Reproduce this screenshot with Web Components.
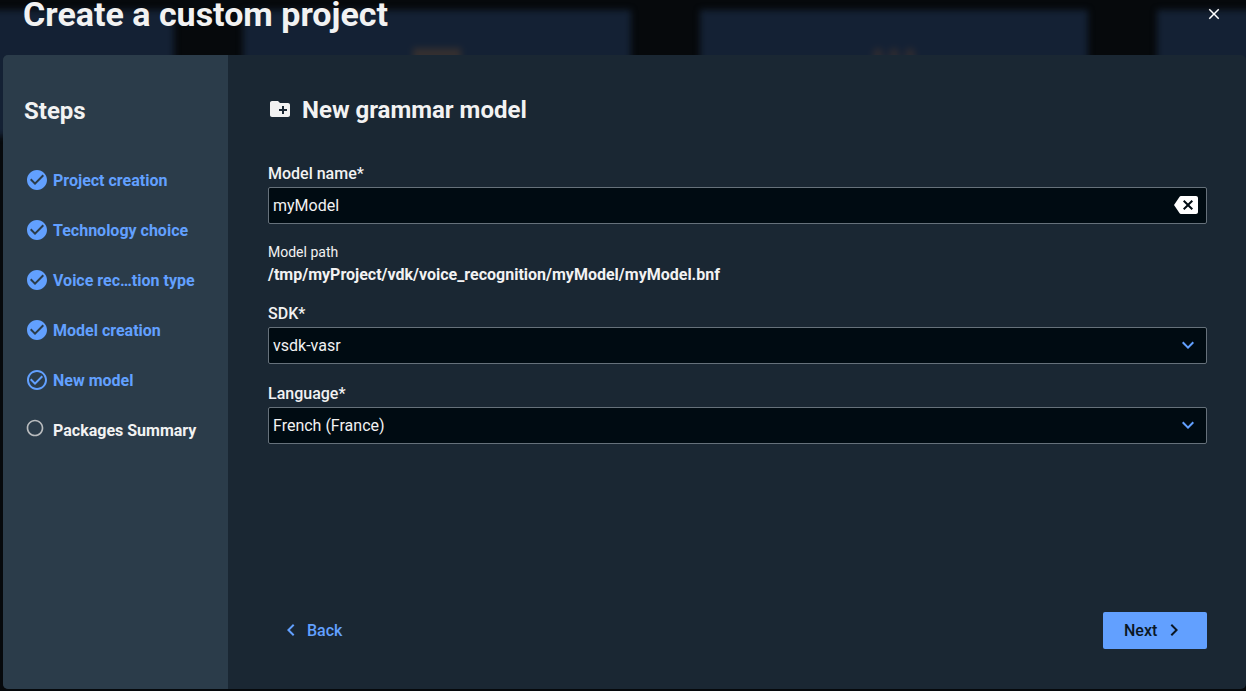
<!DOCTYPE html>
<html lang="en">
<head>
<meta charset="utf-8">
<meta name="viewport" content="width=device-width, initial-scale=1">
<title>Create a custom project</title>
<style>
  body {
    margin: 0;
    background: #05080b;
    color: #f2f2f2;
    font: 16px/20px Roboto, sans-serif;
    --accent: #62a0ff;
    --panel: #1a2733;
    --side: #2b3c4a;
    --field: #000b12;
    --border: #66717b;
  }
</style>
</head>
<body>
<project-wizard heading="Create a custom project">
  <step-list slot="steps" heading="Steps">
    <step-item state="done">Project creation</step-item>
    <step-item state="done">Technology choice</step-item>
    <step-item state="done">Voice rec…tion type</step-item>
    <step-item state="done">Model creation</step-item>
    <step-item state="current">New model</step-item>
    <step-item state="todo">Packages Summary</step-item>
  </step-list>
  <model-form heading="New grammar model">
    <text-field label="Model name*" value="myModel"></text-field>
    <path-info label="Model path">/tmp/myProject/vdk/voice_recognition/myModel/myModel.bnf</path-info>
    <select-field label="SDK*" options="vsdk-vasr|vsdk-csdk"></select-field>
    <select-field label="Language*" options="French (France)|English (United States)"></select-field>
  </model-form>
  <wizard-button slot="actions" kind="back">Back</wizard-button>
  <wizard-button slot="actions" kind="next">Next</wizard-button>
</project-wizard>

<script>
const icons = {
  close: 'M19 6.41L17.59 5 12 10.59 6.41 5 5 6.41 10.59 12 5 17.59 6.41 19 12 13.41 17.59 19 19 17.59 13.41 12z',
  done: 'M12 2C6.48 2 2 6.48 2 12s4.48 10 10 10 10-4.48 10-10S17.52 2 12 2zm-2 15l-5-5 1.41-1.41L10 14.17l7.59-7.59L19 8l-9 9z',
  current: 'M16.59 7.58L10 14.17l-3.59-3.58L5 12l5 5 8-8zM12 2C6.48 2 2 6.48 2 12s4.48 10 10 10 10-4.48 10-10S17.52 2 12 2zm0 18c-4.42 0-8-3.58-8-8s3.58-8 8-8 8 3.58 8 8-3.58 8-8 8z',
  todo: 'M12 2C6.48 2 2 6.48 2 12s4.48 10 10 10 10-4.48 10-10S17.52 2 12 2zm0 18c-4.42 0-8-3.58-8-8s3.58-8 8-8 8 3.58 8 8-3.58 8-8 8z',
  folder: 'M20 6h-8l-2-2H4c-1.11 0-1.99.89-1.99 2L2 18c0 1.11.89 2 2 2h16c1.11 0 2-.89 2-2V8c0-1.11-.89-2-2-2zm-1 8h-3v3h-2v-3h-3v-2h3V9h2v3h3v2z',
  clear: 'M22 3H7c-.69 0-1.23.35-1.59.88L0 12l5.41 8.11c.36.53.9.89 1.59.89h15c1.1 0 2-.9 2-2V5c0-1.1-.9-2-2-2zm-3 12.59L17.59 17 14 13.41 10.41 17 9 15.59 12.59 12 9 8.41 10.41 7 14 10.59 17.59 7 19 8.41 15.41 12 19 15.59z',
  down: 'M16.59 8.59L12 13.17 7.41 8.59 6 10l6 6 6-6z',
  back: 'M15.41 7.41L14 6l-6 6 6 6 1.41-1.41L10.83 12z',
  next: 'M10 6L8.59 7.41 13.17 12l-4.58 4.59L10 18l6-6z'
};

function icon(name, size = 24) {
  return `<svg viewBox="0 0 24 24" width="${size}" height="${size}" fill="currentColor" aria-hidden="true"><path d="${icons[name]}"/></svg>`;
}

class BlurredBackdrop extends HTMLElement {
  constructor() {
    super();
    this.attachShadow({ mode: 'open' }).innerHTML = `
      <style>
        :host {
          position: absolute;
          inset: 0;
          z-index: -1;
          overflow: hidden;
          background: #06090c;
        }

        .cards {
          display: flex;
          gap: 69px;
          margin: 10px 0 0 -214px;
          filter: blur(3px);
        }

        .card {
          flex: none;
          display: flex;
          justify-content: center;
          align-items: flex-end;
          gap: 6px;
          box-sizing: border-box;
          width: 388px;
          height: 126px;
          padding-bottom: 68px;
          background: #142134;
        }

        .tile {
          width: 48px;
          height: 20px;
          background: #332f30;
        }

        .dot {
          width: 10px;
          height: 20px;
          border-radius: 5px;
          background: #2c2a31;
        }
      </style>
      <div class="cards">
        <div class="card"></div>
        <div class="card"><div class="tile"></div></div>
        <div class="card"><div class="dot"></div><div class="dot"></div><div class="dot"></div></div>
        <div class="card"></div>
      </div>
    `;
  }
}

class ProjectWizard extends HTMLElement {
  constructor() {
    super();
    this.attachShadow({ mode: 'open' }).innerHTML = `
      <style>
        :host {
          position: relative;
          z-index: 0;
          display: flex;
          flex-direction: column;
          box-sizing: border-box;
          min-height: 100vh;
          padding: 0 0 2px 3px;
        }

        header {
          display: flex;
          align-items: center;
          justify-content: space-between;
          height: 28px;
          margin-bottom: 27px;
          padding: 0 23px 0 20px;
        }

        h1 {
          margin: 0;
          font-size: 34px;
          line-height: 28px;
          font-weight: 700;
        }

        .close {
          display: flex;
          padding: 0;
          border: 0;
          background: none;
          color: #fff;
          cursor: pointer;
        }

        .panel {
          flex: 1;
          display: flex;
          border-radius: 5px;
          overflow: hidden;
          background: var(--panel);
        }

        main {
          flex: 1;
          display: flex;
          flex-direction: column;
          justify-content: space-between;
          min-width: 0;
          padding: 41px 39px 40px 40px;
        }

        footer {
          display: flex;
          justify-content: space-between;
        }
      </style>
      <blurred-backdrop></blurred-backdrop>
      <header>
        <h1>${this.getAttribute('heading')}</h1>
        <button class="close" type="button" aria-label="Close">${icon('close', 18)}</button>
      </header>
      <div class="panel">
        <slot name="steps"></slot>
        <main>
          <slot></slot>
          <footer><slot name="actions"></slot></footer>
        </main>
      </div>
    `;
  }
}

class StepList extends HTMLElement {
  constructor() {
    super();
    this.attachShadow({ mode: 'open' }).innerHTML = `
      <style>
        :host {
          flex: none;
          box-sizing: border-box;
          width: 225px;
          padding: 42px 21px;
          background: var(--side);
        }

        h2 {
          margin: 0 0 43px;
          font-size: 24px;
          line-height: 28px;
          font-weight: 700;
        }

        nav {
          display: flex;
          flex-direction: column;
          gap: 25px;
        }
      </style>
      <h2>${this.getAttribute('heading')}</h2>
      <nav aria-label="Steps"><slot></slot></nav>
    `;
  }
}

class StepItem extends HTMLElement {
  constructor() {
    super();
    const state = this.getAttribute('state');
    this.attachShadow({ mode: 'open' }).innerHTML = `
      <style>
        :host {
          display: grid;
          grid-template-columns: 24px auto;
          gap: 4px;
          line-height: 25px;
          font-weight: 700;
          color: var(--accent);
          white-space: nowrap;
          margin-left: 1px;
        }

        :host([state='todo']) {
          color: inherit;
        }

        :host([state='todo']) svg {
          color: #b9bcbe;
        }

        svg {
          display: block;
        }
      </style>
      ${icon(state, state === 'todo' ? 20 : 24)}
      <span><slot></slot></span>
    `;
  }
}

class ModelForm extends HTMLElement {
  constructor() {
    super();
    this.attachShadow({ mode: 'open' }).innerHTML = `
      <style>
        :host {
          display: block;
        }

        h2 {
          display: flex;
          align-items: center;
          gap: 10px;
          margin: 0 0 39px;
          font-size: 24px;
          line-height: 28px;
          font-weight: 700;
        }

        h2 svg {
          margin-bottom: 2px;
        }

        form {
          display: flex;
          flex-direction: column;
          gap: 19px;
        }
      </style>
      <h2>${icon('folder')}${this.getAttribute('heading')}</h2>
      <form><slot></slot></form>
    `;
  }
}

const fieldStyle = `
  :host {
    display: flex;
    flex-direction: column;
    gap: 3px;
  }

  label {
    font-weight: 500;
    line-height: 21px;
  }

  .box {
    display: grid;
    align-items: center;
    border: 1px solid var(--border);
    border-radius: 2px;
    background: var(--field);
  }

  input,
  select {
    grid-area: 1 / 1;
    appearance: none;
    box-sizing: border-box;
    width: 100%;
    height: 35px;
    margin: 0;
    padding: 0 40px 0 4px;
    border: 0;
    outline: 0;
    background: none;
    color: inherit;
    font: inherit;
  }

  .box:focus-within {
    border-color: var(--accent);
  }

  option {
    background: var(--field);
  }

  button,
  svg {
    display: block;
  }

  .box svg {
    margin-bottom: 1px;
  }
`;

class TextField extends HTMLElement {
  constructor() {
    super();
    this.attachShadow({ mode: 'open' }).innerHTML = `
      <style>
        ${fieldStyle}
        button {
          grid-area: 1 / 1;
          justify-self: end;
          margin-right: 8px;
          padding: 0;
          border: 0;
          background: none;
          color: #fff;
          cursor: pointer;
        }
      </style>
      <label for="field">${this.getAttribute('label')}</label>
      <div class="box">
        <input id="field" type="text" value="${this.getAttribute('value')}">
        <button type="button" aria-label="Clear">${icon('clear')}</button>
      </div>
    `;
    const input = this.shadowRoot.querySelector('input');
    this.shadowRoot.querySelector('button').addEventListener('click', () => {
      input.value = '';
      input.focus();
    });
  }
}

class SelectField extends HTMLElement {
  constructor() {
    super();
    const options = this.getAttribute('options').split('|');
    this.attachShadow({ mode: 'open' }).innerHTML = `
      <style>
        ${fieldStyle}
        svg {
          grid-area: 1 / 1;
          justify-self: end;
          margin-right: 6px;
          color: var(--accent);
          pointer-events: none;
        }
      </style>
      <label for="field">${this.getAttribute('label')}</label>
      <div class="box">
        <select id="field">${options.map(o => `<option>${o}</option>`).join('')}</select>
        ${icon('down')}
      </div>
    `;
  }
}

class PathInfo extends HTMLElement {
  constructor() {
    super();
    this.attachShadow({ mode: 'open' }).innerHTML = `
      <style>
        :host {
          display: flex;
          flex-direction: column;
          gap: 4px;
        }

        .label {
          font-size: 14px;
          line-height: 18px;
        }

        .path {
          font-weight: 700;
          line-height: 19px;
          overflow-wrap: anywhere;
        }
      </style>
      <span class="label">${this.getAttribute('label')}</span>
      <span class="path"><slot></slot></span>
    `;
  }
}

class WizardButton extends HTMLElement {
  constructor() {
    super();
    const back = this.getAttribute('kind') === 'back';
    this.attachShadow({ mode: 'open' }).innerHTML = `
      <style>
        :host {
          display: block;
        }

        button {
          display: flex;
          align-items: center;
          justify-content: space-between;
          gap: 4px;
          min-width: 104px;
          height: 37px;
          padding: 0 21px;
          border: 0;
          border-radius: 2px;
          background: var(--accent);
          color: #0b1724;
          font: inherit;
          font-weight: 500;
          cursor: pointer;
        }

        svg {
          margin-bottom: 1px;
        }

        :host([kind='back']) button {
          min-width: 0;
          padding: 0 11px;
          background: none;
          color: var(--accent);
        }
      </style>
      <button type="button">${back ? icon('back') : ''}<slot></slot>${back ? '' : icon('next')}</button>
    `;
  }
}

customElements.define('blurred-backdrop', BlurredBackdrop);
customElements.define('project-wizard', ProjectWizard);
customElements.define('step-list', StepList);
customElements.define('step-item', StepItem);
customElements.define('model-form', ModelForm);
customElements.define('text-field', TextField);
customElements.define('select-field', SelectField);
customElements.define('path-info', PathInfo);
customElements.define('wizard-button', WizardButton);
</script>
</body>
</html>
